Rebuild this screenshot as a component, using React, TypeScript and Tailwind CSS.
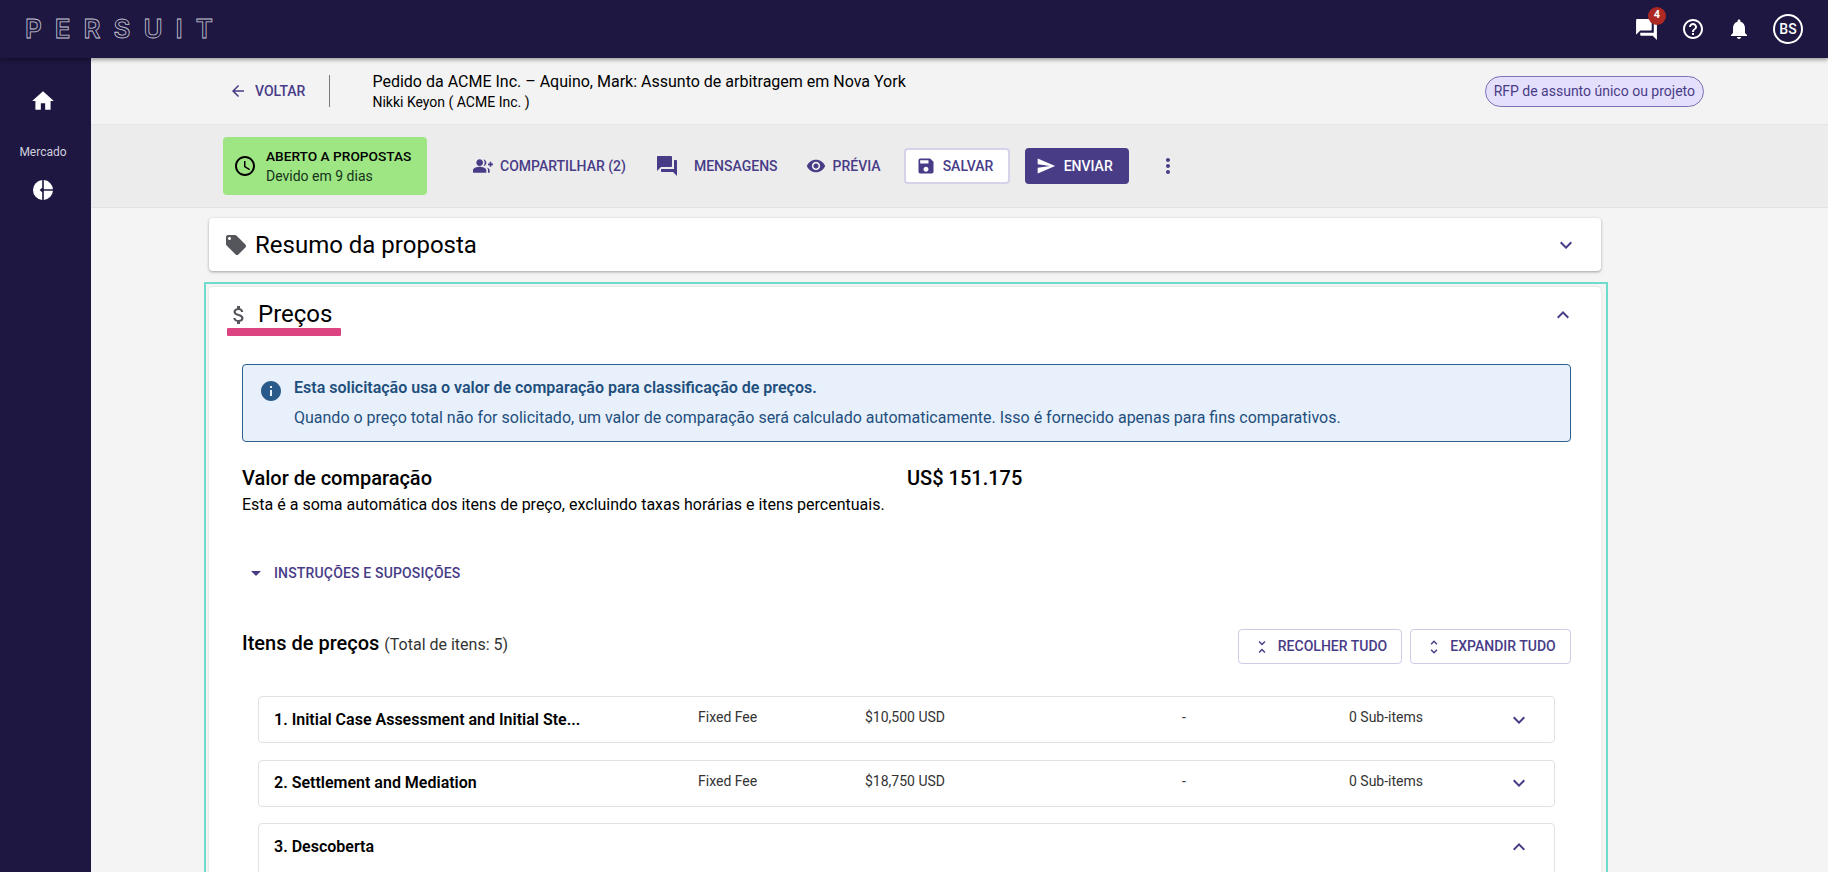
import React from "react";
import {
  MdHome, MdArrowBack, MdAccessTime, MdGroupAdd, MdQuestionAnswer, MdVisibility, MdSave, MdSend,
  MdMoreVert, MdLocalOffer, MdAttachMoney, MdInfo, MdArrowDropDown, MdExpandMore, MdExpandLess,
  MdUnfoldLess, MdUnfoldMore, MdHelpOutline, MdNotifications,
} from "react-icons/md";

function MarketIcon() {
  return (
    <svg viewBox="0 0 24 24" className="mt-[17px] h-[24px] w-[24px]" fill="currentColor">
      <path d="M11.2 2.03A10 10 0 0 0 11.2 21.97V14.2L8.6 12L11.2 9.8Z" />
      <path d="M12.8 2.03A10 10 0 0 1 21.97 11.2H12.8Z" />
      <path d="M12.8 12.8H21.97A10 10 0 0 1 12.8 21.97Z" />
    </svg>
  );
}

function Row({ title, type, price }: { title: string; type: string; price: string }) {
  return (
    <div className="flex h-[47px] items-center rounded border border-[#e2e2e2] bg-white pl-[15px] text-[#333]">
      <div className="w-[424px] text-[16px] font-semibold text-black">{title}</div>
      <div className="w-[167px] -translate-y-[2px] text-[14px]">{type}</div>
      <div className="w-[317px] -translate-y-[2px] text-[14px]">{price}</div>
      <div className="w-[167px] -translate-y-[2px] text-[14px]">-</div>
      <div className="w-[158px] -translate-y-[2px] text-[14px]">0 Sub-items</div>
      <MdExpandMore className="text-[24px] text-[#483c87]" />
    </div>
  );
}

export default function App() {
  return (
    <div className="flex h-[872px] flex-col overflow-hidden bg-[#f4f4f4] font-['Roboto',sans-serif] text-black">
      <header className="relative z-10 flex h-[58px] shrink-0 items-center justify-between bg-[#1d1741] pl-[25px] pr-[25px] shadow-[0_2px_4px_rgba(0,0,0,0.35)]">
        <div className="font-['Inter',sans-serif] text-[26px] font-semibold leading-none tracking-[13px] text-transparent [-webkit-text-stroke:0.8px_#c9c8d4]">
          PERSUIT
        </div>
        <div className="flex items-center text-white">
          <div className="relative mr-[22px]">
            <MdQuestionAnswer className="text-[25px]" />
            <span className="absolute -right-[7px] -top-[10px] flex h-[18px] w-[18px] items-center justify-center rounded-full bg-[#ad2a24] text-[11px] font-bold">4</span>
          </div>
          <MdHelpOutline className="mr-[22px] text-[24px]" />
          <MdNotifications className="mr-[22px] text-[24px]" />
          <div className="flex h-[30px] w-[30px] items-center justify-center rounded-full border-2 border-white text-[14px] font-medium">BS</div>
        </div>
      </header>

      <div className="flex min-h-0 flex-1">
        <aside className="flex w-[91px] shrink-0 flex-col items-center bg-[#1d1741] pr-[5px] pt-[30px] text-white">
          <MdHome className="text-[26px]" />
          <div className="mt-[29px] text-[12px] text-[#cfcedb]">Mercado</div>
          <MarketIcon />
        </aside>

        <main className="min-w-0 flex-1">
          <div className="flex h-[67px] items-center justify-between border-b border-[#e6e6e6] bg-[#f3f3f3] pl-[138px] pr-[124px]">
            <div className="flex items-center">
              <div className="flex items-center gap-[8px] text-[14px] font-medium text-[#483c87]">
                <MdArrowBack className="text-[18px]" />
                <span>VOLTAR</span>
              </div>
              <div className="ml-[24px] mr-[42px] h-[32px] w-px bg-[#777]" />
              <div>
                <div className="text-[16px] leading-[22px]">Pedido da ACME Inc. – Aquino, Mark: Assunto de arbitragem em Nova York</div>
                <div className="mt-[-1px] text-[14px] leading-[20px]">Nikki Keyon ( ACME Inc. )</div>
              </div>
            </div>
            <div className="flex h-[31px] items-center rounded-full border border-[#7c70b6] bg-[#e4dffb] px-[8px] text-[14px] text-[#483c87]">
              RFP de assunto único ou projeto
            </div>
          </div>

          <div className="flex h-[83px] items-center border-b border-[#e2e2e2] bg-[#ececec] pl-[132px] text-[14px] font-medium text-[#483c87]">
            <div className="flex h-[58px] w-[204px] items-center rounded bg-[#9ee683] pl-[10px] text-black">
              <MdAccessTime className="mr-[4px] text-[24px]" />
              <div className="ml-[5px]">
                <div className="text-[13.7px] leading-[20px]">ABERTO A PROPOSTAS</div>
                <div className="font-normal leading-[20px] text-[#14331a]">Devido em 9 dias</div>
              </div>
            </div>
            <MdGroupAdd className="ml-[46px] text-[20px]" />
            <span className="ml-[7px]">COMPARTILHAR (2)</span>
            <MdQuestionAnswer className="ml-[29px] text-[24px]" />
            <span className="ml-[15px]">MENSAGENS</span>
            <MdVisibility className="ml-[28px] text-[20px]" />
            <span className="ml-[7px]">PRÉVIA</span>
            <button className="ml-[23px] flex h-[36px] w-[106px] items-center gap-[7px] rounded border-2 border-[#d6d2ea] bg-white pl-[10px]">
              <MdSave className="text-[20px]" />
              <span>SALVAR</span>
            </button>
            <button className="ml-[15px] flex h-[36px] w-[104px] items-center gap-[8px] rounded bg-[#483c87] pl-[11px] text-white">
              <MdSend className="text-[20px]" />
              <span>ENVIAR</span>
            </button>
            <MdMoreVert className="ml-[27px] text-[24px]" />
          </div>

          <div className="ml-[118px] mt-[10px] flex h-[53px] w-[1392px] items-center justify-between rounded bg-white pl-[15px] pr-[23px] shadow-[0_1px_3px_rgba(0,0,0,0.35)]">
            <div className="flex items-center gap-[7px]">
              <MdLocalOffer className="text-[24px] text-[#55555c]" />
              <span className="text-[24px] font-[450]">Resumo da proposta</span>
            </div>
            <MdExpandMore className="text-[24px] text-[#483c87]" />
          </div>

          <div className="ml-[113px] mt-[11px] h-[600px] w-[1404px] border-2 border-b-0 border-[#6edccb] pl-[3px] pr-[5px] pt-[3px]">
            <div className="h-full rounded bg-white shadow-[0_0_2px_rgba(0,0,0,0.15)]">
              <div className="flex h-[43px] items-end justify-between pl-[18px] pr-[26px]">
                <div className="flex w-[114px] items-center">
                  <MdAttachMoney className="text-[24px] text-[#55555c]" />
                  <span className="ml-[7px] -translate-y-[1px] text-[24px] font-[450] leading-[30px]">Preços</span>
                </div>
                <MdExpandLess className="mb-[3px] text-[24px] text-[#483c87]" />
              </div>
              <div className="ml-[18px] mt-[-2px] h-[8px] w-[114px] rounded-[1px] bg-[#db4480]" />

              <div className="ml-[33px] mr-[30px] mt-[28px] flex h-[78px] rounded border border-[#2e5f8f] bg-[#e8f0fb] pl-[16px] pt-[13px] text-[16px] text-[#1f4f7d]">
                <MdInfo className="mt-px text-[24px] text-[#2a5a8a]" />
                <div className="ml-[11px]">
                  <div className="font-semibold leading-[20px]">Esta solicitação usa o valor de comparação para classificação de preços.</div>
                  <div className="mt-[10px] leading-[20px]">Quando o preço total não for solicitado, um valor de comparação será calculado automaticamente. Isso é fornecido apenas para fins comparativos.</div>
                </div>
              </div>

              <div className="ml-[33px] mr-[30px] mt-[23px] flex">
                <div className="w-[665px]">
                  <div className="text-[20px] font-medium leading-[26px]">Valor de comparação</div>
                  <div className="mt-[2px] text-[16px] leading-[24px]">Esta é a soma automática dos itens de preço, excluindo taxas horárias e itens percentuais.</div>
                </div>
                <div className="text-[20px] font-medium leading-[26px]">US$ 151.175</div>
              </div>

              <div className="ml-[35px] mt-[44px] flex items-center text-[14px] font-medium text-[#483c87]">
                <MdArrowDropDown className="text-[24px]" />
                <span className="ml-[6px] tracking-[0.16px]">INSTRUÇÕES E SUPOSIÇÕES</span>
              </div>

              <div className="ml-[33px] mr-[30px] mt-[44px] flex items-start justify-between">
                <div className="pt-[1px] leading-[26px]">
                  <span className="text-[20px] font-medium">Itens de preços</span>
                  <span className="ml-[5px] text-[16px] text-[#333]">(Total de itens: 5)</span>
                </div>
                <div className="flex gap-[8px] text-[14px] font-medium text-[#483c87]">
                  <button className="flex h-[35px] w-[164px] items-center justify-center gap-[7px] rounded border border-[#cfcbe6]">
                    <MdUnfoldLess className="text-[18px]" />
                    <span>RECOLHER TUDO</span>
                  </button>
                  <button className="flex h-[35px] w-[161px] items-center justify-center gap-[7px] rounded border border-[#cfcbe6]">
                    <MdUnfoldMore className="text-[18px]" />
                    <span>EXPANDIR TUDO</span>
                  </button>
                </div>
              </div>

              <div className="ml-[49px] mr-[46px] mt-[32px] flex flex-col gap-[16.5px]">
                <Row title="1. Initial Case Assessment and Initial Ste..." type="Fixed Fee" price="$10,500 USD" />
                <Row title="2. Settlement and Mediation" type="Fixed Fee" price="$18,750 USD" />
                <div className="flex h-[100px] items-start justify-between rounded border border-[#e2e2e2] bg-white pl-[15px] pr-[23px] pt-[11px]">
                  <div className="text-[16px] font-semibold">3. Descoberta</div>
                  <MdExpandLess className="text-[24px] text-[#483c87]" />
                </div>
              </div>
            </div>
          </div>
        </main>
      </div>
    </div>
  );
}
